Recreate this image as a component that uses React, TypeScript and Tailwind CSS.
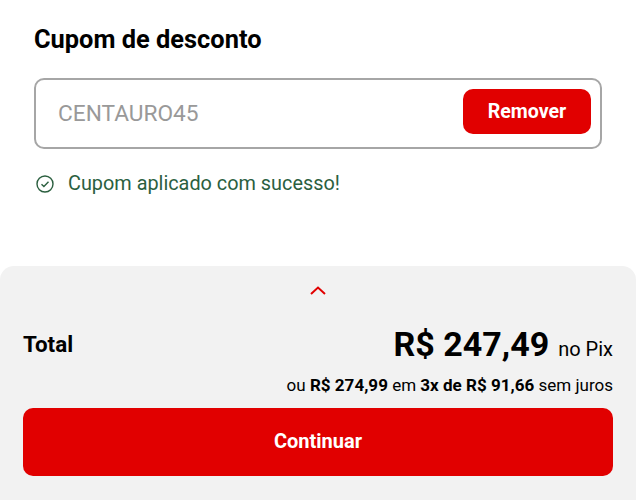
export default function App() {
  return (
    <div className="w-[636px] h-[500px] bg-white flex flex-col overflow-hidden font-['Roboto',sans-serif]">
      <div className="flex-1 px-[34px] pt-[24px]">
        <h2 className="text-[25.4px] leading-[30px] font-bold text-black">Cupom de desconto</h2>
        <div className="mt-[24px] h-[71px] border-2 border-[#a6a6a6] rounded-[10px] flex items-center justify-between pl-[22px] pr-[9px]">
          <span className="mt-[2px] text-[22.7px] text-[#999999]">CENTAURO45</span>
          <button className="mb-[4px] w-[128px] h-[45px] bg-[#e10000] rounded-[10px] text-white text-[19.6px] font-bold">Remover</button>
        </div>
        <div className="mt-[23px] flex items-center gap-[14px] pl-[2px]">
          <svg width="18" height="18" viewBox="0 0 18 18" fill="none" stroke="#2b5f3f" strokeWidth="1.4">
            <circle cx="9" cy="9" r="8" />
            <path d="M5.5 9.2l2.4 2.4 4.6-4.8" />
          </svg>
          <span className="text-[19.85px] leading-[24px] text-[#2b5f3f]">Cupom aplicado com sucesso!</span>
        </div>
      </div>
      <div className="h-[234px] bg-[#f2f2f2] rounded-t-[14px] px-[23px] pt-[19px]">
        <div className="flex justify-center">
          <svg width="18" height="10" viewBox="0 0 18 10" fill="none" stroke="#e10000" strokeWidth="2">
            <path d="M2 9l7-6.5 7 6.5" />
          </svg>
        </div>
        <div className="mt-[26px] flex items-center justify-between text-black">
          <span className="mt-[2px] text-[22.4px] font-bold">Total</span>
          <span className="flex items-baseline gap-[9px]">
            <span className="text-[34px] leading-[46px] font-bold">R$ 247,49</span>
            <span className="text-[20px]">no Pix</span>
          </span>
        </div>
        <p className="mt-[6px] text-right text-[17.05px] leading-[24px] text-black">
          ou <b className="font-bold">R$ 274,99</b> em <b className="font-bold">3x de R$ 91,66</b> sem juros
        </p>
        <button className="mt-[11px] pb-[2px] w-full h-[68px] bg-[#e10000] rounded-[10px] text-white text-[20px] font-bold">Continuar</button>
      </div>
    </div>
  );
}
